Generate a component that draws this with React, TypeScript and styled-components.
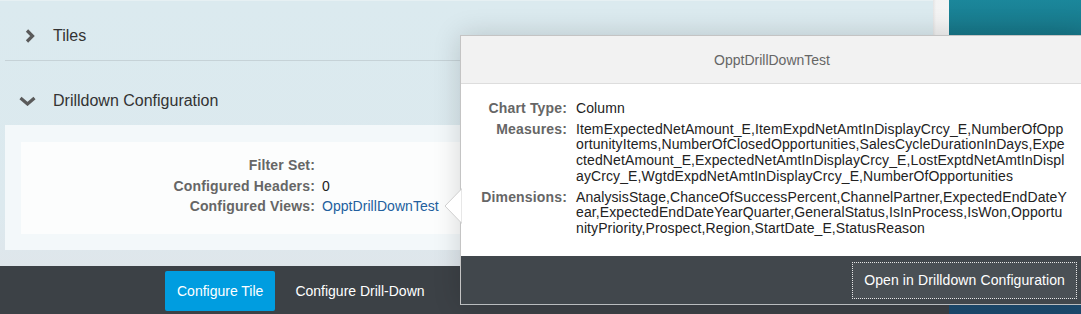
import React from "react";
import styled, { createGlobalStyle } from "styled-components";

const Global = createGlobalStyle`
  html, body { margin: 0; padding: 0; }
  body { font-family: Arial, "Liberation Sans", Helvetica, sans-serif; background: #dcebf0; }
  * { box-sizing: border-box; }
`;

const Page = styled.div`
  position: relative;
  width: 1081px;
  height: 314px;
  overflow: hidden;
  display: grid;
  grid-template-columns: 949px 1fr;
`;

const Workspace = styled.div`
  display: flex;
  flex-direction: column;
  min-height: 0;
`;

const Content = styled.div`
  flex: 1;
  display: grid;
  grid-template-columns: 933px 16px;
  min-height: 0;
`;

const Main = styled.div`
  background: linear-gradient(to bottom, #dbeaef 0%, #dce9ee 80%, #dfe6eb 100%);
  border-top: 1px solid #e6f0f3;
  padding: 11px 0 0 5px;
  display: flex;
  flex-direction: column;
`;

const ScrollStrip = styled.div`
  background: linear-gradient(to right, #e4e4e4 0, #f3f3f3 3px, #f4f4f4 100%);
`;

const AccordionHeader = styled.div<{ $tall?: boolean }>`
  display: flex;
  align-items: center;
  height: ${(p) => (p.$tall ? "64px" : "48px")};
  padding-top: ${(p) => (p.$tall ? "16px" : "0")};
  padding-left: 17px;
  color: #333;
  font-size: 16px;
`;

const ChevronBox = styled.span`
  width: 31px;
  display: flex;
  align-items: center;
`;

const Divider = styled.div`
  height: 1px;
  background: #c6d2d7;
`;

const PanelBody = styled.div`
  background: #f3f8fa;
  padding: 17px 0 16px 16px;
`;

const FormCard = styled.div`
  background: #fcfdfd;
  height: 92px;
  padding-top: 13px;
`;

const FormGrid = styled.div`
  display: grid;
  grid-template-columns: 294px auto;
  column-gap: 7px;
  font-size: 14px;
  line-height: 20.5px;
`;

const FormLabel = styled.div`
  text-align: right;
  font-weight: bold;
  color: #666;
  letter-spacing: 0.16px;
`;

const FormValue = styled.div<{ $link?: boolean }>`
  color: ${(p) => (p.$link ? "#22609e" : "#222")};
  letter-spacing: 0.05px;
`;

const Footer = styled.div`
  height: 48px;
  background: #3c4146;
  display: flex;
  align-items: center;
  padding-left: 165px;
  gap: 8px;
`;

const FooterButton = styled.button<{ $primary?: boolean }>`
  height: 40px;
  margin-top: 2px;
  border: none;
  border-radius: 2px;
  padding: 0 12px;
  font-family: inherit;
  font-size: 14px;
  color: #fff;
  background: ${(p) => (p.$primary ? "#009de0" : "transparent")};
  cursor: pointer;
`;

const SideColumn = styled.div`
  background: linear-gradient(to bottom, #1b879b 0px, #177688 35px, #1b5f7e 160px, #1c4c70 300px, #1c4a6e 100%);
`;

const Popover = styled.div`
  position: absolute;
  left: 460px;
  top: 35px;
  width: 624px;
  height: 270px;
  display: flex;
  flex-direction: column;
  border: 1px solid #c4c4c4;
  border-bottom: 1px solid #b9bcbe;
  box-shadow: 0 0 26px rgba(0, 0, 0, 0.16);
  font-size: 14px;
`;

const Arrow = styled.svg`
  position: absolute;
  left: -17px;
  top: 152px;
  width: 18px;
  height: 36px;
`;

const PopHeader = styled.div`
  height: 48px;
  flex: none;
  background: #f2f2f2;
  border-bottom: 1px solid #dddddd;
  display: flex;
  align-items: center;
  justify-content: center;
  color: #666;
  padding-top: 1px;
`;

const PopBody = styled.div`
  flex: 1;
  background: #fff;
  padding: 17px 0 0 15px;
`;

const DetailGrid = styled.div`
  display: grid;
  grid-template-columns: 91px 491px;
  column-gap: 9px;
  row-gap: 5px;
  line-height: 15.7px;
`;

const DetailLabel = styled.div`
  text-align: right;
  font-weight: bold;
  color: #666;
  letter-spacing: 0.16px;
`;

const DetailValue = styled.div`
  color: #222;
  word-break: break-all;
  letter-spacing: 0.1px;
`;

const PopFooter = styled.div`
  height: 48px;
  flex: none;
  background: #41474c;
  display: flex;
  align-items: center;
  justify-content: flex-end;
  padding-right: 6px;
`;

const OutlineButton = styled.button`
  height: 37px;
  padding: 0 11px;
  background: #4a5055;
  border: 1px dotted #e6e6e6;
  color: #fff;
  font-family: inherit;
  font-size: 14px;
  letter-spacing: 0.1px;
  cursor: pointer;
`;

const ChevronRight = () => (
  <svg width="13" height="14" viewBox="0 0 13 14">
    <polyline points="5,1.5 10.5,7 5,12.5" fill="none" stroke="#5a5a5a" strokeWidth="3.2" />
  </svg>
);

const ChevronDown = () => (
  <svg width="17" height="10" viewBox="0 0 17 10" style={{ marginLeft: -3 }}>
    <polyline points="1.5,2 8.5,8 15.5,2" fill="none" stroke="#5a5a5a" strokeWidth="3.2" />
  </svg>
);

const measures =
  "ItemExpectedNetAmount_E,ItemExpdNetAmtInDisplayCrcy_E,NumberOfOpportunityItems,NumberOfClosedOpportunities,SalesCycleDurationInDays,ExpectedNetAmount_E,ExpectedNetAmtInDisplayCrcy_E,LostExptdNetAmtInDisplayCrcy_E,WgtdExpdNetAmtInDisplayCrcy_E,NumberOfOpportunities";
const dimensions =
  "AnalysisStage,ChanceOfSuccessPercent,ChannelPartner,ExpectedEndDateYear,ExpectedEndDateYearQuarter,GeneralStatus,IsInProcess,IsWon,OpportunityPriority,Prospect,Region,StartDate_E,StatusReason";

export default function App() {
  return (
    <>
      <Global />
      <Page>
        <Workspace>
          <Content>
            <Main>
              <AccordionHeader>
                <ChevronBox>
                  <ChevronRight />
                </ChevronBox>
                Tiles
              </AccordionHeader>
              <Divider />
              <AccordionHeader $tall>
                <ChevronBox>
                  <ChevronDown />
                </ChevronBox>
                Drilldown Configuration
              </AccordionHeader>
              <PanelBody>
                <FormCard>
                  <FormGrid>
                    <FormLabel>Filter Set:</FormLabel>
                    <FormValue />
                    <FormLabel>Configured Headers:</FormLabel>
                    <FormValue>0</FormValue>
                    <FormLabel>Configured Views:</FormLabel>
                    <FormValue $link>OpptDrillDownTest</FormValue>
                  </FormGrid>
                </FormCard>
              </PanelBody>
            </Main>
            <ScrollStrip />
          </Content>
          <Footer>
            <FooterButton $primary>Configure Tile</FooterButton>
            <FooterButton>Configure Drill-Down</FooterButton>
          </Footer>
        </Workspace>
        <SideColumn />
        <Popover>
          <Arrow viewBox="0 0 18 36">
            <polygon points="18,0.5 1,18 18,35.5" fill="#fff" stroke="#cfcfcf" strokeWidth="1" />
          </Arrow>
          <PopHeader>OpptDrillDownTest</PopHeader>
          <PopBody>
            <DetailGrid>
              <DetailLabel>Chart Type:</DetailLabel>
              <DetailValue>Column</DetailValue>
              <DetailLabel>Measures:</DetailLabel>
              <DetailValue>{measures}</DetailValue>
              <DetailLabel>Dimensions:</DetailLabel>
              <DetailValue>{dimensions}</DetailValue>
            </DetailGrid>
          </PopBody>
          <PopFooter>
            <OutlineButton>Open in Drilldown Configuration</OutlineButton>
          </PopFooter>
        </Popover>
      </Page>
    </>
  );
}
